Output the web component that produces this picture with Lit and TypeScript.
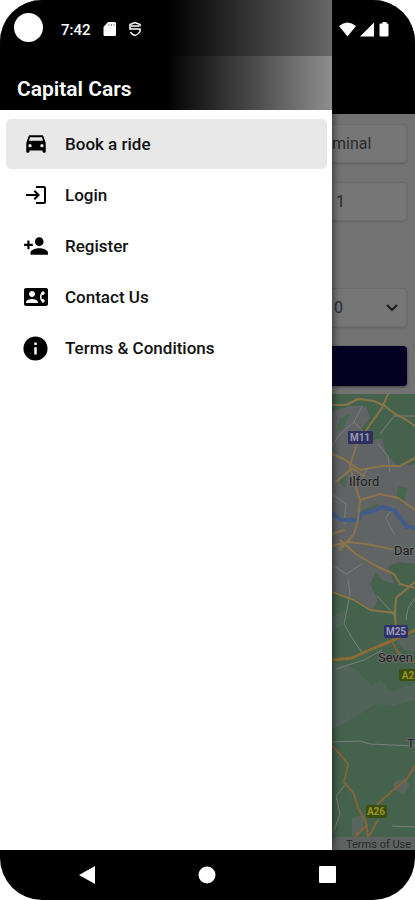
import { LitElement, html, css, svg } from "lit";
import { customElement, state } from "lit/decorators.js";

interface MenuEntry {
  label: string;
  path: string;
  size: "small" | "medium" | "large";
}

const MENU: MenuEntry[] = [
  {
    label: "Book a ride",
    size: "medium",
    path: "M18.92 5.01C18.72 4.42 18.16 4 17.5 4h-11c-.66 0-1.21.42-1.42 1.01L3 11v8c0 .55.45 1 1 1h1c.55 0 1-.45 1-1v-1h12v1c0 .55.45 1 1 1h1c.55 0 1-.45 1-1v-8l-2.08-5.99zM6.5 15c-.83 0-1.5-.67-1.5-1.5S5.67 12 6.5 12s1.5.67 1.5 1.5S7.33 15 6.5 15zm11 0c-.83 0-1.5-.67-1.5-1.5s.67-1.5 1.5-1.5 1.5.67 1.5 1.5-.67 1.5-1.5 1.5zM5.500 9l1-3.200h11l1 3.200H5.500z",
  },
  {
    label: "Login",
    size: "small",
    path: "M11 7L9.6 8.4l2.6 2.6H2v2h10.2l-2.6 2.6L11 17l5-5-5-5zm9 12h-8v2h8c1.1 0 2-.9 2-2V5c0-1.1-.9-2-2-2h-8v2h8v14z",
  },
  {
    label: "Register",
    size: "medium",
    path: "M15 12c2.21 0 4-1.79 4-4s-1.79-4-4-4-4 1.79-4 4 1.79 4 4 4zm-9-2V7H4v3H1v2h3v3h2v-3h3v-2H6zm9 4c-2.67 0-8 1.34-8 4v2h16v-2c0-2.66-5.33-4-8-4z",
  },
  {
    label: "Contact Us",
    size: "small",
    path: "M22 3H2C.9 3 0 3.9 0 5v14c0 1.1.9 2 2 2h20c1.1 0 1.99-.9 1.99-2L24 5c0-1.1-.9-2-2-2zM8 6c1.66 0 3 1.34 3 3s-1.34 3-3 3-3-1.34-3-3 1.34-3 3-3zm6 12H2v-1c0-2 4-3.1 6-3.1s6 1.1 6 3.1v1zm3.85-4h1.64L21 16l-1.99 1.99c-1.31-.98-2.28-2.38-2.73-3.99-.18-.64-.28-1.31-.28-2s.1-1.36.28-2c.45-1.62 1.42-3.01 2.73-3.99L21 8l-1.51 2h-1.64c-.22.63-.35 1.3-.35 2s.13 1.37.35 2z",
  },
  {
    label: "Terms & Conditions",
    size: "large",
    path: "M12 2C6.48 2 2 6.48 2 12s4.48 10 10 10 10-4.48 10-10S17.52 2 12 2zm1 15h-2v-6h2v6zm0-8h-2V7h2v2z",
  },
];

@customElement("side-drawer")
class SideDrawer extends LitElement {
  @state() private selected = 0;

  static styles = css`
    :host {
      display: flex;
      flex-direction: column;
      background: #fff;
      box-shadow: 1px 0 8px rgba(0, 0, 0, 0.6);
      z-index: 1;
    }
    .head {
      background: linear-gradient(90deg, #000 50%, #222 62%, #8e8e8e 100%);
      color: #fff;
    }
    .status {
      display: flex;
      align-items: center;
      height: 56px;
      padding: 0 14px;
      box-sizing: border-box;
      background: rgba(0, 0, 0, 0.27);
      font-size: 15px;
      font-weight: 500;
    }
    .camera {
      width: 29px;
      height: 29px;
      border-radius: 50%;
      background: #fff;
      margin: 0 18px 2px 0;
    }
    .clock {
      line-height: 20px;
      margin-top: 4px;
    }
    .status svg {
      display: block;
      margin: 2px 0 0 12px;
    }
    h1 {
      margin: 0;
      padding: 19px 17px 7px;
      font-size: 21px;
      line-height: 28px;
      font-weight: 600;
    }
    ul {
      display: grid;
      gap: 1px;
      list-style: none;
      margin: 0;
      padding: 9px 5px 0 6px;
    }
    .entry {
      display: flex;
      align-items: center;
      gap: 15px;
      height: 50px;
      padding: 0 15px;
      border-radius: 5px;
      color: #111;
      font-size: 17px;
      line-height: 20px;
      font-weight: 500;
      text-decoration: none;
    }
    .entry.on {
      background: #e8e8e8;
    }
    .icon {
      display: flex;
      justify-content: center;
      width: 29px;
    }
    .icon svg {
      fill: #000;
    }
    .small {
      width: 24px;
      height: 24px;
    }
    .medium {
      width: 26px;
      height: 26px;
    }
    .large {
      width: 29px;
      height: 29px;
    }
  `;

  render() {
    return html`
      <header class="head">
        <div class="status">
          <span class="camera"></span>
          <span class="clock">7:42</span>
          <svg width="14" height="16" viewBox="0 0 14 16" aria-hidden="true">
            <path fill="#fff" d="M5 1h6.500q1.500 0 1.500 1.500v11q0 1.500-1.500 1.500h-9.500q-1.500 0-1.500-1.500V6z" />
            <path stroke="#888" d="M6 3v2M8.500 3v2M11 3v2" />
          </svg>
          <svg width="12" height="16" viewBox="0 0 12 16" aria-hidden="true">
            <path fill="none" stroke="#fff" stroke-width="1.500" d="M11 5.500V3.500L6 1.500L1 3.500V8h10v2.500Q9.500 13.500 6 14.500Q2.500 13.500 1.500 11M2 5h8" />
          </svg>
        </div>
        <h1>Capital Cars</h1>
      </header>
      <nav aria-label="Main menu">
        <ul>
          ${MENU.map(
            (m, i) => html`<li>
              <a class="entry ${i === this.selected ? "on" : ""}" href="#" @click=${() => (this.selected = i)}>
                <span class="icon"><svg class=${m.size} viewBox="0 0 24 24" aria-hidden="true"><path d=${m.path} /></svg></span>
                ${m.label}
              </a>
            </li>`
          )}
        </ul>
      </nav>
    `;
  }
}

@customElement("map-view")
class MapView extends LitElement {
  static styles = css`
    :host {
      display: flex;
      flex: 1;
      min-height: 0;
      overflow: hidden;
      background: #45624d;
    }
    svg {
      display: block;
      width: 100%;
      height: 100%;
      min-height: 456px;
    }
    text {
      font-family: Roboto, sans-serif;
    }
    .town {
      font-size: 13px;
      fill: #1c1c1c;
      stroke: #6c6e6e;
      stroke-width: 2px;
      paint-order: stroke;
    }
    .sign {
      font-size: 10px;
      font-weight: 700;
      fill: #9a9ab0;
      text-anchor: middle;
    }
    .sign.a {
      fill: #9a931e;
    }
    .terms {
      font-size: 11px;
      fill: #282a2a;
    }
  `;

  private roads() {
    return svg`
      <g fill="none" stroke-linejoin="round" stroke-linecap="round">
        <g stroke="#7a7f7e" stroke-width="1">
          <path d="M30 12L22 28L8 40L0 52M22 28L34 40M46 50L56 62L58 78M83 22H62L48 40M0 100L14 110L12 130M36 74L28 88M62 112L54 124L62 140" />
          <path d="M16 186L18 200L12 230L20 244L31 260M45 202L58 216L64 224M83 204L76 214L74 226M4 275L32 266L50 256" />
          <path d="M0 348L28 347L38 350L83 352M14 390L4 402L8 420L2 436M60 432L83 433M2 172L14 180L30 170M6 154L18 146" />
        </g>
        <path d="M0 119L9 126H26L29 120L44 116L50 113L62 116L68 124L75 133L83 134" stroke="#425b88" stroke-width="4" />
        <g stroke="#8b7448" stroke-width="2">
          <path d="M0 11L14 11L26 5L42 7L53 12L63 20L73 25L83 32M56 0L50 14L37 32L24 52L18 72L22 88L28 106L26 126L22 140L8 156" />
          <path d="M0 60L12 65L28 76L50 72L68 72L83 64M4 88L20 74L32 82M0 140L12 136M28 106L48 100L66 104L83 116" />
          <path d="M8 146L24 160L44 172L62 180L68 190L83 194M0 152L16 148L34 150L60 155" />
          <path d="M0 198L22 206L38 216L63 219M83 188L64 204L63 219L64 240" />
        </g>
        <path d="M0 266L20 264L42 254L62 246L83 236" stroke="#8b6c36" stroke-width="3" />
        <g stroke="#856438" stroke-width="2">
          <path d="M60 248L66 258L74 266L83 268M0 352L8 360L16 370L12 388L22 400L26 414L34 428L36 444M83 372L74 386L66 392L52 404L46 410M46 426L36 444M34 432L22 444" />
        </g>
      </g>
    `;
  }

  render() {
    return html`
      <svg viewBox="0 0 83 456" preserveAspectRatio="xMinYMin slice" role="img" aria-label="Map of east London and Kent">
        <path fill="#616465" d="M0 18L18 12L34 12L38 24L28 36L34 48L50 44L54 60L66 72L83 70V170L68 168L56 172L62 190L50 186L44 178L38 190L46 206L40 216L22 204L0 196z" />
        <path fill="#48664f" d="M8 24L18 20L12 34L4 38zM66 92L75 94L72 110L64 104zM8 80L14 82V94L8 90zM30 116L46 110L48 114L30 120z" />
        <path fill="#52645a" d="M0 268L22 274L40 292L48 286L58 298L83 290V306L60 312L44 310L18 326L0 336zM0 222L14 216L10 232L0 236z" />
        <path fill="#5a645e" d="M62 388L72 384L78 392L72 400L62 396zM20 424L34 420L30 438L20 442zM64 246L83 240V258L72 256z" />
        ${this.roads()}
        <rect x="16" y="37" width="25" height="13" rx="1" fill="#30305e" />
        <text class="sign" x="28" y="47">M11</text>
        <text class="town" x="17" y="92">Ilford</text>
        <text class="town" x="62" y="161">Dar</text>
        <rect x="52" y="231" width="24" height="13" rx="2" fill="#30306a" />
        <text class="sign" x="64" y="241">M25</text>
        <text class="town" x="46" y="268">Seven</text>
        <rect x="67" y="275" width="24" height="12" rx="2" fill="#3a4e12" />
        <text class="sign a" x="76" y="285">A2</text>
        <text class="town" x="75" y="354">T</text>
        <rect x="34" y="411" width="21" height="13" rx="2" fill="#3a4e12" />
        <text class="sign a" x="44" y="421">A26</text>
        <rect x="0" y="443" width="83" height="13" fill="#5e6361" />
        <text class="terms" x="14" y="454">Terms of Use</text>
      </svg>
    `;
  }
}

@customElement("booking-page")
class BookingPage extends LitElement {
  static styles = css`
    :host {
      display: flex;
      flex-direction: column;
      min-width: 0;
      overflow: hidden;
      background: #737373;
    }
    .bar {
      display: flex;
      align-items: flex-start;
      gap: 4px;
      height: 114px;
      padding: 22px 0 0 7px;
      box-sizing: border-box;
      background: #000;
    }
    form {
      display: grid;
      gap: 19px;
      padding: 10px 8px 8px 0;
    }
    .field {
      display: block;
      box-sizing: border-box;
      width: 100%;
      min-width: 0;
      height: 39px;
      margin: 0;
      padding: 0;
      border: 1px solid #6c6c6c;
      border-left: 0;
      border-radius: 0 4px 4px 0;
      background: #767676;
      color: #2b2b2b;
      font: 16px Roboto, sans-serif;
      box-shadow: 0 1px 2px rgba(0, 0, 0, 0.15);
    }
    .second {
      padding-left: 4px;
    }
    .pick {
      position: relative;
      margin-top: 48px;
    }
    select.field {
      appearance: none;
      padding-left: 2px;
    }
    .pick svg {
      position: absolute;
      right: 9px;
      top: 16px;
      pointer-events: none;
    }
    button {
      height: 40px;
      border: 0;
      border-radius: 0 4px 4px 0;
      background: #030022;
      box-shadow: 0 1px 3px rgba(0, 0, 0, 0.5);
    }
  `;

  render() {
    return html`
      <div class="bar">
        <svg width="17" height="15" viewBox="0 0 17 15" aria-hidden="true"><path fill="#fff" d="M0 4Q8.500-3 17 4L8.500 14.500z" /></svg>
        <svg width="14" height="15" viewBox="0 0 14 15" aria-hidden="true"><path fill="#fff" d="M14 0.500V14.500H0z" /></svg>
        <svg width="16" height="15" viewBox="0 0 16 15" aria-hidden="true"><path fill="#fff" d="M4.500 0h4v1.500h1q1 0 1 1v11q0 1-1 1h-7q-1 0-1-1v-11q0-1 1-1h2z" /></svg>
      </div>
      <form @submit=${(e: Event) => e.preventDefault()}>
        <input class="field" aria-label="Pickup" .value=${"minal"} />
        <input class="field second" aria-label="Destination" .value=${"1"} />
        <div class="pick">
          <select class="field" aria-label="Passengers"><option>0</option></select>
          <svg width="12" height="8" viewBox="0 0 12 8" aria-hidden="true"><path fill="none" stroke="#1c1c1c" stroke-width="2" d="M1 1l5 5 5-5" /></svg>
        </div>
        <button aria-label="Get quote"></button>
      </form>
      <map-view></map-view>
    `;
  }
}

@customElement("app-root")
class AppRoot extends LitElement {
  static styles = css`
    :host {
      display: block;
      background: #fff;
      font-family: Roboto, sans-serif;
    }
    .phone {
      display: flex;
      flex-direction: column;
      min-height: 100vh;
      border-radius: 42px;
      overflow: hidden;
      background: #000;
    }
    main {
      flex: 1;
      display: grid;
      grid-template-columns: minmax(0, 4fr) minmax(0, 1fr);
    }
    .keys {
      display: grid;
      grid-template-columns: repeat(3, 1fr);
      height: 50px;
      padding: 0 27px;
      box-sizing: border-box;
    }
    .keys button {
      display: flex;
      align-items: center;
      justify-content: center;
      border: 0;
      padding: 0;
      background: none;
    }
  `;

  render() {
    return html`
      <div class="phone">
        <main>
          <side-drawer></side-drawer>
          <booking-page></booking-page>
        </main>
        <div class="keys">
          <button aria-label="Back"><svg width="18" height="18"><path fill="#fff" d="M1 9L17 0V18z" /></svg></button>
          <button aria-label="Home"><svg width="18" height="18"><circle cx="9" cy="9" r="8.500" fill="#fff" /></svg></button>
          <button aria-label="Recent apps"><svg width="18" height="18"><rect width="17" height="17" rx="1" fill="#fff" /></svg></button>
        </div>
      </div>
    `;
  }
}
